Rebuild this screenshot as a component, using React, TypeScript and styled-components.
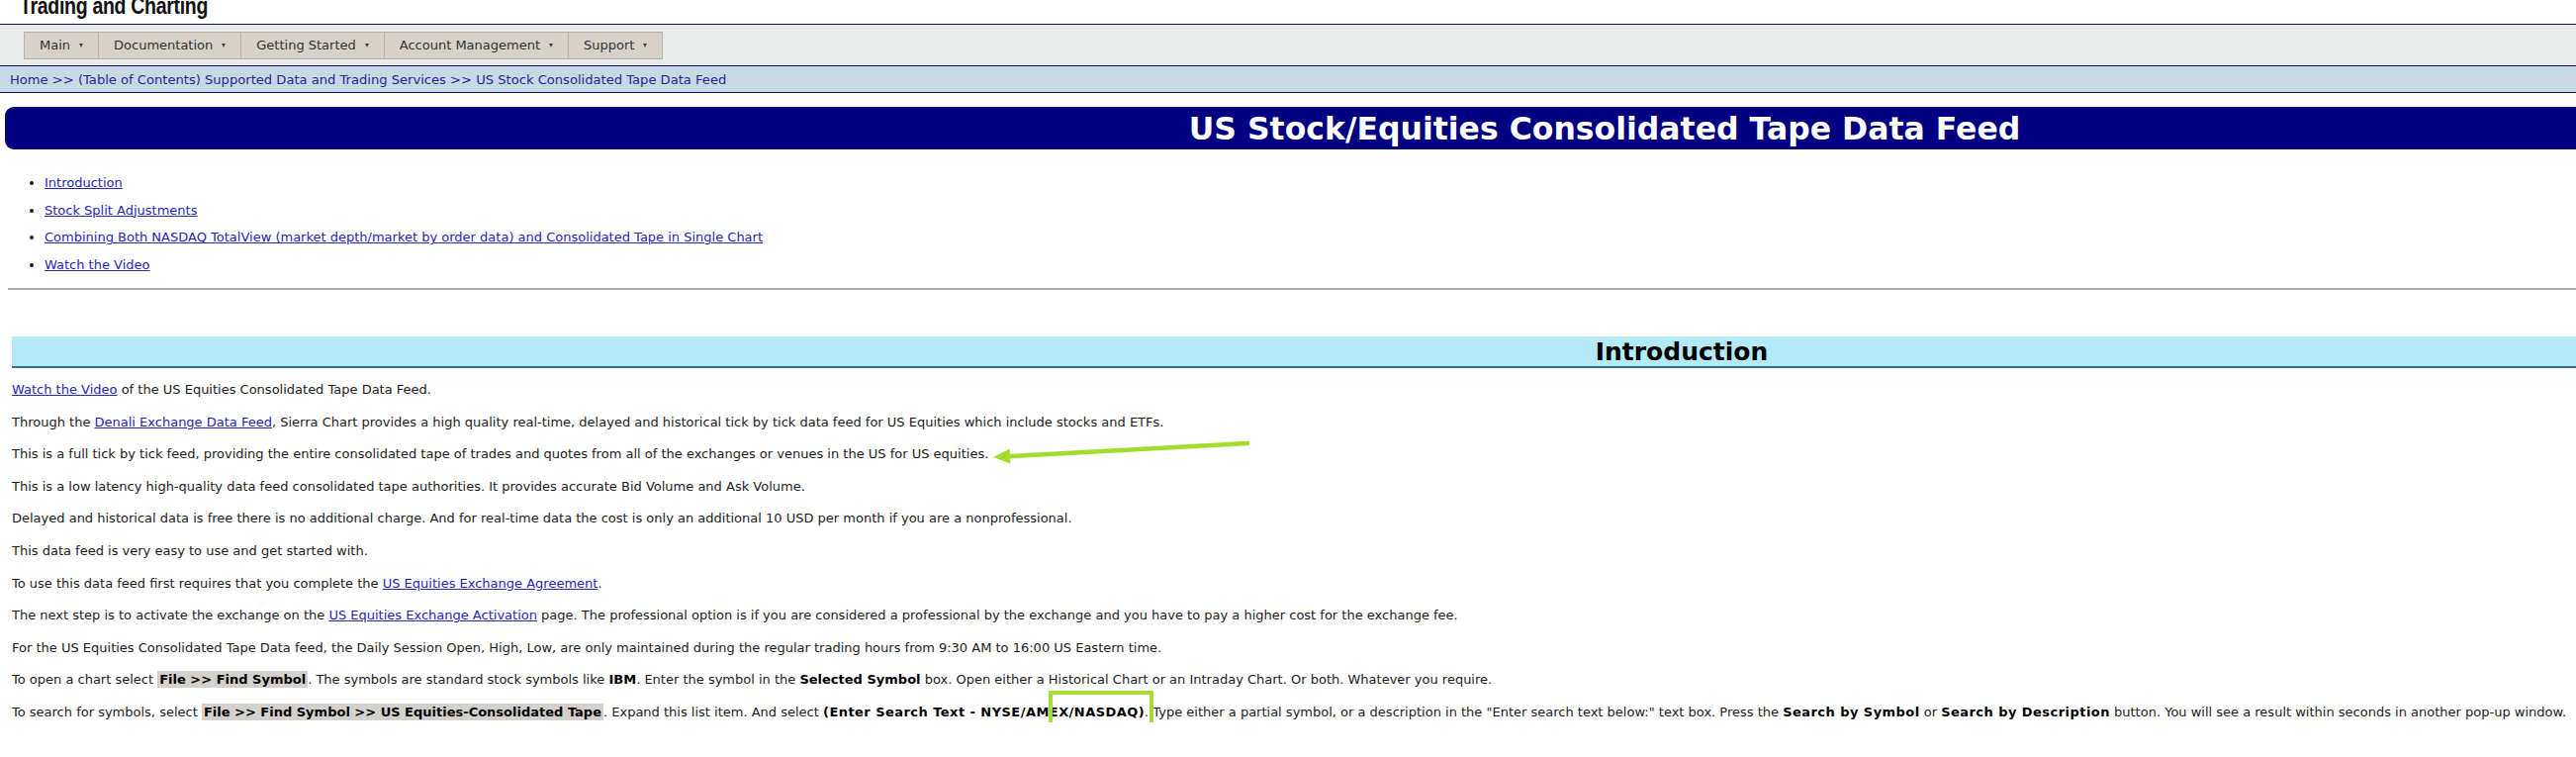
import React from "react";
import styled, { createGlobalStyle } from "styled-components";

const GlobalStyle = createGlobalStyle`
  html, body {
    margin: 0;
    padding: 0;
    background: #fff;
    overflow: hidden;
  }
  body {
    font-family: "DejaVu Sans", Verdana, sans-serif;
    font-size: 13px;
    color: #1c1c1c;
  }
`;

const Page = styled.div`
  width: 3400px;
`;

const TopArea = styled.div`
  height: 24px;
  overflow: hidden;
  padding-left: 20px;
`;

const SiteTitle = styled.div`
  margin-top: -3px;
  font-family: "Liberation Sans", Arial, sans-serif;
  font-weight: bold;
  font-size: 19.5px;
  line-height: 20px;
  letter-spacing: -0.3px;
  color: #111;
  transform: scaleY(1.2);
  transform-origin: 0 80%;
`;

const MenuBar = styled.nav`
  height: 41px;
  background: #e9ebeb;
  border-top: 1px solid #0b0b5c;
  border-bottom: 1px solid #0b0b5c;
  display: flex;
  align-items: center;
  padding-left: 25px;
`;

const MenuTab = styled.div`
  display: flex;
  align-items: center;
  gap: 9px;
  height: 26px;
  padding: 0 15px;
  margin-left: -1px;
  background: #d6d2ca;
  border: 1px solid #b7b3ab;
  font-size: 13px;
  color: #333;
`;

const Caret = styled.span`
  width: 0;
  height: 0;
  border-left: 2.5px solid transparent;
  border-right: 2.5px solid transparent;
  border-top: 4px solid #444;
`;

const Crumbs = styled.div`
  height: 26px;
  background: #c6d9e5;
  border-bottom: 1px solid #0b0b5c;
  display: flex;
  align-items: center;
  padding-left: 10px;
  font-size: 13.1px;
  color: #1d2b8e;
`;

const TitleBand = styled.h1`
  margin: 14px 0 0 5px;
  width: 3234px;
  height: 43px;
  background: #000080;
  border-radius: 9px;
  display: flex;
  align-items: center;
  justify-content: center;
  font-size: 31.5px;
  font-weight: bold;
  color: #fff;
`;

const Toc = styled.ul`
  margin: 26px 0 0;
  padding-left: 45px;
  list-style: disc;

  li {
    line-height: 16px;
  }
  li + li {
    margin-top: 11.7px;
  }
`;

const Link = styled.a`
  color: #2626b8;
  text-decoration: underline;
`;

const Rule = styled.hr`
  margin: 15px 0 0 8px;
  border: 0;
  height: 2px;
  background: #a9a9a9;
`;

const SectionBand = styled.h2`
  margin: 47px 0 0 12px;
  width: 3376px;
  height: 32px;
  box-sizing: border-box;
  background: #b3eaf6;
  border-bottom: 2px solid #3d6c8c;
  display: flex;
  align-items: center;
  justify-content: center;
  font-size: 25px;
  font-weight: bold;
  color: #000;
`;

const Body = styled.div`
  margin: 12px 0 0 12px;
  display: flex;
  flex-direction: column;
  gap: 12.6px;
`;

const Para = styled.p`
  margin: 0;
  line-height: 20px;
  white-space: nowrap;
`;

const Hl = styled.b`
  background: #d4d1cc;
  padding: 1px 2px;
  color: #000;
`;

const Strong = styled.b<{ $wide?: boolean }>`
  color: #000;
  letter-spacing: ${({ $wide }) => ($wide ? "0.45px" : "0")};
`;

const Anchor = styled.span`
  position: relative;
  display: inline-block;
  width: 0;
  height: 20px;
  vertical-align: top;
`;

const ArrowSvg = styled.svg`
  position: absolute;
  left: 3px;
  top: -7px;
  overflow: visible;
`;

const Boxed = styled.span`
  position: relative;
`;

const BoxMark = styled.span`
  position: absolute;
  left: -10px;
  right: -9px;
  top: -14px;
  bottom: -14px;
  border: 4px solid #a6dc35;
`;

const menus = ["Main", "Documentation", "Getting Started", "Account Management", "Support"];
const toc = [
  "Introduction",
  "Stock Split Adjustments",
  "Combining Both NASDAQ TotalView (market depth/market by order data) and Consolidated Tape in Single Chart",
  "Watch the Video",
];

export default function App() {
  return (
    <Page>
      <GlobalStyle />
      <TopArea>
        <SiteTitle>Trading and Charting</SiteTitle>
      </TopArea>
      <MenuBar>
        {menus.map((m) => (
          <MenuTab key={m}>
            {m}
            <Caret />
          </MenuTab>
        ))}
      </MenuBar>
      <Crumbs>
        Home &gt;&gt; (Table of Contents) Supported Data and Trading Services &gt;&gt; US Stock Consolidated Tape Data Feed
      </Crumbs>
      <TitleBand>US Stock/Equities Consolidated Tape Data Feed</TitleBand>
      <Toc>
        {toc.map((t) => (
          <li key={t}>
            <Link>{t}</Link>
          </li>
        ))}
      </Toc>
      <Rule />
      <SectionBand>Introduction</SectionBand>
      <Body>
        <Para>
          <Link>Watch the Video</Link> of the US Equities Consolidated Tape Data Feed.
        </Para>
        <Para>
          Through the <Link>Denali Exchange Data Feed</Link>, Sierra Chart provides a high quality real-time, delayed and
          historical tick by tick data feed for US Equities which include stocks and ETFs.
        </Para>
        <Para>
          This is a full tick by tick feed, providing the entire consolidated tape of trades and quotes from all of the
          exchanges or venues in the US for US equities.
          <Anchor>
            <ArrowSvg width="270" height="30" viewBox="0 0 270 30">
              <line x1="16" y1="19.2" x2="259" y2="6" stroke="#a2dc2c" strokeWidth="4.5" strokeLinecap="round" />
              <polygon points="2,20 18.6,11.6 19.4,26.6" fill="#a2dc2c" />
            </ArrowSvg>
          </Anchor>
        </Para>
        <Para>
          This is a low latency high-quality data feed consolidated tape authorities. It provides accurate Bid Volume and
          Ask Volume.
        </Para>
        <Para>
          Delayed and historical data is free there is no additional charge. And for real-time data the cost is only an
          additional 10 USD per month if you are a nonprofessional.
        </Para>
        <Para>This data feed is very easy to use and get started with.</Para>
        <Para>
          To use this data feed first requires that you complete the <Link>US Equities Exchange Agreement</Link>.
        </Para>
        <Para>
          The next step is to activate the exchange on the <Link>US Equities Exchange Activation</Link> page. The
          professional option is if you are considered a professional by the exchange and you have to pay a higher cost
          for the exchange fee.
        </Para>
        <Para>
          For the US Equities Consolidated Tape Data feed, the Daily Session Open, High, Low, are only maintained during
          the regular trading hours from 9:30 AM to 16:00 US Eastern time.
        </Para>
        <Para>
          To open a chart select <Hl>File &gt;&gt; Find Symbol</Hl>. The symbols are standard stock symbols like{" "}
          <Strong>IBM</Strong>. Enter the symbol in the <Strong>Selected Symbol</Strong> box. Open either a Historical
          Chart or an Intraday Chart. Or both. Whatever you require.
        </Para>
        <Para>
          To search for symbols, select <Hl>File &gt;&gt; Find Symbol &gt;&gt; US Equities-Consolidated Tape</Hl>. Expand
          this list item. And select{" "}
          <Strong $wide>
            (Enter Search Text - NYSE/AME
            <Boxed>
              X/NASDAQ)
              <BoxMark />
            </Boxed>
          </Strong>
          . Type either a partial symbol, or a description in the "Enter search text below:" text box. Press the{" "}
          <Strong $wide>Search by Symbol</Strong> or <Strong $wide>Search by Description</Strong> button. You will see a
          result within seconds in another pop-up window.
        </Para>
      </Body>
    </Page>
  );
}
